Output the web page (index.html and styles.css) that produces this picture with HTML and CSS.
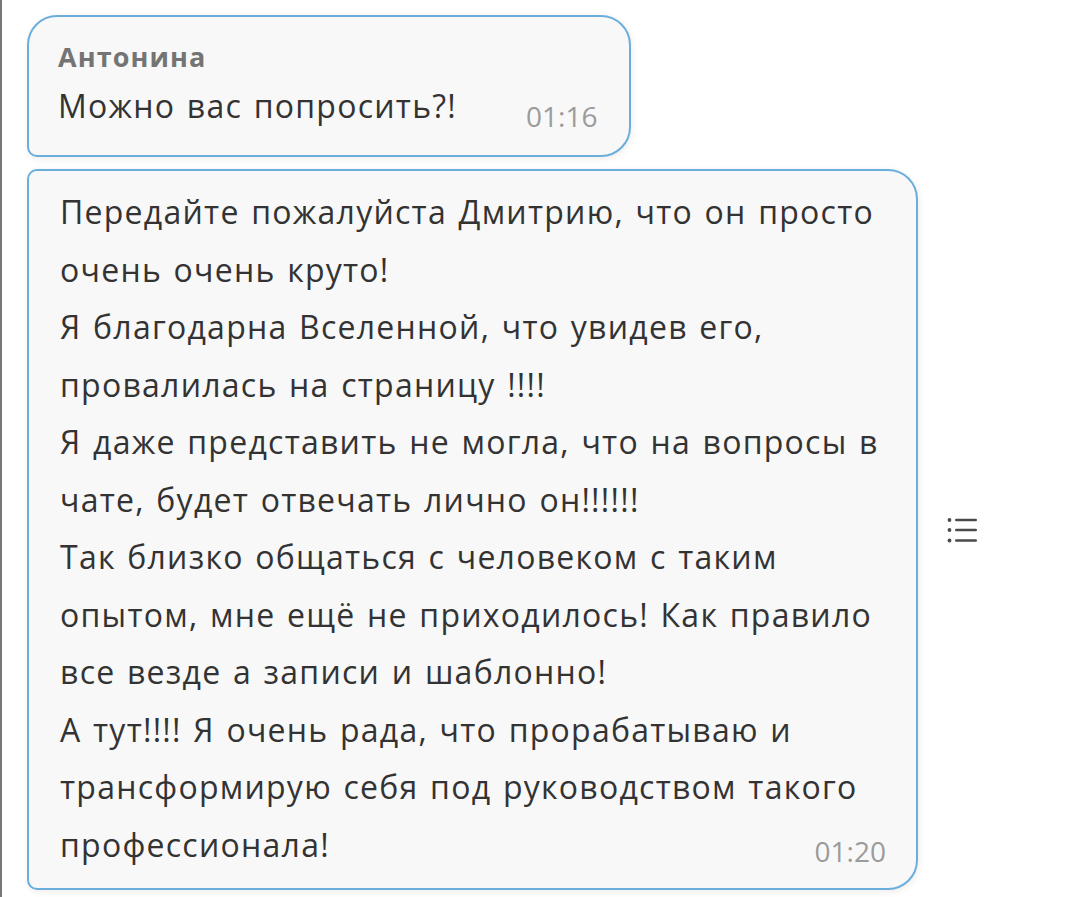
FILE: index.html
```html
<!DOCTYPE html>
<html lang="ru">
<head>
<meta charset="utf-8">
<title>Чат</title>
<link rel="stylesheet" href="styles.css">
</head>
<body>
<div class="page">
  <div class="msg-row">
    <div class="bubble bubble-first">
      <div class="author">Антонина</div>
      <div class="line-row">
        <span class="text">Можно вас попросить?!</span>
        <span class="time">01:16</span>
      </div>
    </div>
  </div>
  <div class="msg-row msg-row-menu">
    <div class="bubble bubble-next">
      <div class="text">Передайте пожалуйста Дмитрию, что он просто<br>очень очень круто!<br>Я благодарна Вселенной, что увидев его,<br>провалилась на страницу !!!!<br>Я даже представить не могла, что на вопросы в<br>чате, будет отвечать лично он!!!!!!<br>Так близко общаться с человеком с таким<br>опытом, мне ещё не приходилось! Как правило<br>все везде а записи и шаблонно!<br>А тут!!!! Я очень рада, что прорабатываю и<br>трансформирую себя под руководством такого</div>
      <div class="line-row line-row-last">
        <span class="text">профессионала!</span>
        <span class="time">01:20</span>
      </div>
    </div>
    <button class="menu-btn" type="button" aria-label="Меню">
      <svg width="32" height="26" viewBox="0 0 32 26">
        <circle cx="2.5" cy="3" r="1.9" fill="#4a4a4a"/>
        <circle cx="2.5" cy="13" r="1.9" fill="#4a4a4a"/>
        <circle cx="2.5" cy="23.5" r="1.9" fill="#4a4a4a"/>
        <rect x="8" y="1.7" width="22" height="2.6" rx="1.2" fill="#4a4a4a"/>
        <rect x="8" y="11.7" width="22" height="2.6" rx="1.2" fill="#4a4a4a"/>
        <rect x="8" y="22.2" width="22" height="2.6" rx="1.2" fill="#4a4a4a"/>
      </svg>
    </button>
  </div>
</div>
</body>
</html>
```

FILE: styles.css
```css
html, body {
  margin: 0;
  padding: 0;
  background: #ffffff;
}

body {
  font-family: "Open Sans", "Noto Sans", "Liberation Sans", sans-serif;
  color: #333333;
}

.page {
  border-left: 2px solid #777777;
  min-height: 897px;
  box-sizing: border-box;
  padding: 15px 0 0 25px;
  display: flex;
  flex-direction: column;
  gap: 12px;
}

.msg-row {
  display: flex;
  align-items: center;
}

.msg-row-menu {
  gap: 29px;
}

.bubble {
  background: #f8f8f8;
  border: 2px solid #6aaedc;
  box-sizing: border-box;
  box-shadow: 1px 2px 6px rgba(120, 110, 80, 0.12);
}

.bubble-first {
  border-radius: 30px 30px 30px 10px;
  padding: 23px 30px 29px 29px;
}

.bubble-next {
  width: 891px;
  border-radius: 10px 30px 30px 10px;
  padding: 12px 28px 15px 31px;
}

.author {
  font-size: 27px;
  line-height: 34px;
  font-weight: 700;
  color: #747474;
  letter-spacing: 1.1px;
}

.bubble-first .line-row {
  margin-top: 12px;
}

.line-row {
  display: flex;
  justify-content: space-between;
  align-items: flex-end;
}

.text {
  font-size: 32px;
  letter-spacing: 1.25px;
  word-spacing: 2px;
  white-space: nowrap;
}

.bubble-first .text {
  line-height: 40px;
  margin-right: 69px;
}

.bubble-next .text {
  line-height: 57.5px;
}

.time {
  font-size: 28px;
  line-height: 20px;
  color: #9b9b9b;
  margin-right: 2px;
}

.line-row-last .time {
  margin-bottom: 12px;
}

.menu-btn {
  border: 0;
  background: transparent;
  padding: 0;
  display: flex;
  cursor: pointer;
}
```
